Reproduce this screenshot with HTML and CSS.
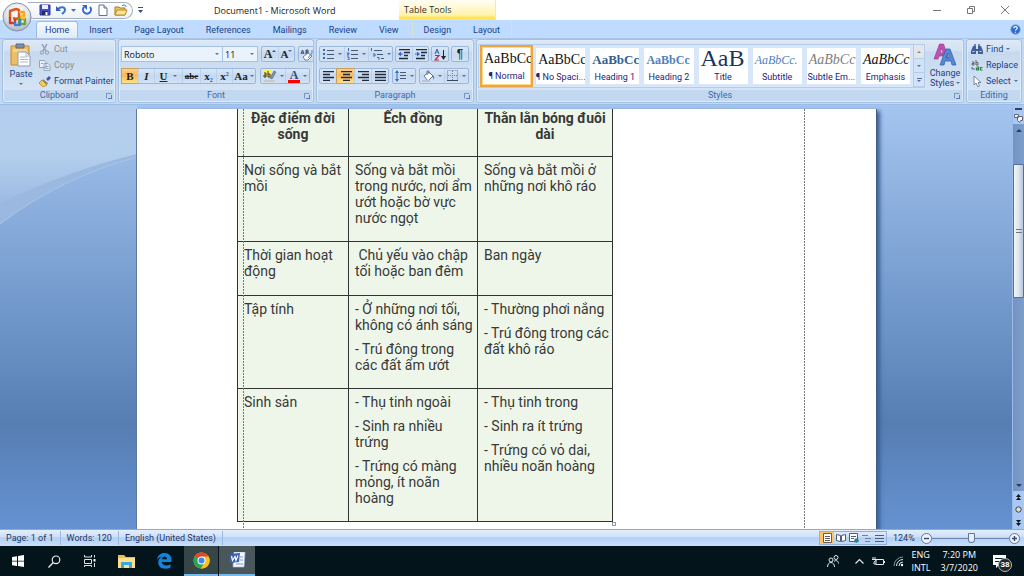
FILE: index.html
```html
<!DOCTYPE html>
<html lang="vi">
<head>
<meta charset="utf-8">
<meta name="viewport" content="width=device-width, initial-scale=1">
<title>Document1 - Microsoft Word</title>
<link rel="stylesheet" href="styles.css">
</head>
<body>
<div class="app">

<header class="titlebar">
  <button class="office" aria-label="Office Button">
    <svg width="32" height="32" viewBox="0 0 32 32"><defs><radialGradient id="orb" cx=".5" cy=".3" r=".75"><stop offset="0" stop-color="#fff"/><stop offset=".6" stop-color="#dde2e8"/><stop offset="1" stop-color="#9aa8b8"/></radialGradient></defs><circle cx="16" cy="16" r="14" fill="url(#orb)" stroke="#8593a5"/><g fill="none" stroke-width="2.4" stroke-linejoin="round"><path d="M9 17V10l6-2 3 1v8l-3 1-3-1" stroke="#e2571c"/><path d="M18 11h5v5h-4" stroke="#f3a51e"/><path d="M9 16v6h5v-4" stroke="#cf3e22"/><path d="M18 18h6v5h-6z" stroke="#6fa63a"/><path d="M14 21v3h5v-6" stroke="#3f7fce"/><path d="M21 13v4h3" stroke="#f7c43a"/></g></svg>
  </button>
  <div class="qat">
    <button class="q" aria-label="Save"><svg width="12" height="12" viewBox="0 0 12 12"><path d="M1 1h10v10H1z" fill="#4450c0" stroke="#2e3795"/><path d="M3 1h6v4H3z" fill="#e8f0ff"/><path d="M3 7h6v4H3z" fill="#242a66"/><path d="M6.500 8h2v3h-2z" fill="#fff"/></svg></button>
    <button class="q" aria-label="Undo"><svg width="12" height="12" viewBox="0 0 12 12"><path d="M3 5c3-3 7-2 7 1 0 2-2 3-3 4" fill="none" stroke="#3b6fd0" stroke-width="2"/><path d="M1 2v5h5z" fill="#2f5fc0"/></svg></button>
    <button class="q tiny" aria-label="Undo list"><svg width="5" height="3"><path d="M0 0h5L2.500 3z" fill="#4c6ea8"/></svg></button>
    <button class="q" aria-label="Redo"><svg width="12" height="12" viewBox="0 0 12 12"><path d="M3 3a4 4 0 1 0 6 0" fill="none" stroke="#3567cb" stroke-width="2"/><path d="M1 1h5v5z" fill="#3567cb"/></svg></button>
    <button class="q" aria-label="New"><svg width="12" height="12" viewBox="0 0 12 12"><path d="M2 1h5l3 3v7.500H2z" fill="#fff" stroke="#61738f"/><path d="M7 1v3h3" fill="#d5dfed" stroke="#61738f"/></svg></button>
    <button class="q open" aria-label="Open"><svg width="14" height="12" viewBox="0 0 14 12"><path d="M1 3h4l1 1h5v7H1z" fill="#f5c65e" stroke="#a87820"/><path d="M3 6h10l-2 5H1z" fill="#ffe49a" stroke="#b88928"/><path d="M8 2c2-2 4-1 4 1" fill="none" stroke="#3567cb"/></svg></button>
  </div>
  <button class="q custom" aria-label="Customize Quick Access Toolbar"><svg width="5" height="6"><path d="M0 0h5v1H0zM0 3h5L2.500 6z" fill="#34507e"/></svg></button>
  <h1 class="title">Document1 - Microsoft Word</h1>
  <div class="context">Table Tools</div>
  <div class="winbtns">
    <button aria-label="Minimize"><svg width="8" height="8"><path d="M0 4.500h8" stroke="#777"/></svg></button>
    <button aria-label="Restore"><svg width="8" height="8"><path d="M.5 2.500h5v5h-5zM2.500 2V.5h5v5H6" fill="none" stroke="#777"/></svg></button>
    <button aria-label="Close"><svg width="8" height="8"><path d="M0 0l8 8M8 0L0 8" stroke="#777"/></svg></button>
  </div>
</header>

<nav class="tabs">
  <button class="tab active">Home</button>
  <button class="tab">Insert</button>
  <button class="tab">Page Layout</button>
  <button class="tab">References</button>
  <button class="tab">Mailings</button>
  <button class="tab">Review</button>
  <button class="tab">View</button>
  <div class="ctxtabs"><button class="tab">Design</button><button class="tab">Layout</button></div>
  <button class="help" aria-label="Help"><svg width="11" height="11" viewBox="0 0 11 11"><circle cx="5.500" cy="5.500" r="4.800" fill="#2e69cf" stroke="#8daede"/><path d="M3.800 4.200c0-2.200 3.500-2 3.400 0 0 1-1.700 1-1.700 2.400M5.500 7.800v1" fill="none" stroke="#fff" stroke-width="1.200"/></svg></button>
</nav>

<div class="ribbon">
  <section class="group clipboard">
    <div class="body">
      <button class="big paste"><svg width="24" height="24" viewBox="0 0 24 24"><path d="M2 3h18v19H2z" fill="#efbd62" stroke="#bd8d3d"/><path d="M7 1h8v4H7z" fill="#7f8fa6" stroke="#5c6b82"/><path d="M4 6h14v3H4z" fill="#f8d48a"/><path d="M9 9h8l4 4v10H9z" fill="#fff" stroke="#8a9cb8"/><path d="M17 9v4h4M11 14h7M11 16.500h8M11 19h8" fill="none" stroke="#a8b8d0"/></svg><span>Paste</span><i class="dn"></i></button>
      <div class="stack">
        <button class="off"><svg width="12" height="11" viewBox="0 0 12 11"><path d="M3 0l4 7M8 0L4 7" stroke="#8c9cb2" stroke-width="1.400"/><circle cx="3" cy="8.500" r="1.700" fill="none" stroke="#8c9cb2"/><circle cx="8" cy="8.500" r="1.700" fill="none" stroke="#8c9cb2"/></svg>Cut</button>
        <button class="off"><svg width="12" height="11" viewBox="0 0 12 11"><path d="M.5.5h5l1.500 2v5H.5zM5 3.500h4l2 2v5H5z" fill="#e8eff8" stroke="#93a5bd"/><path d="M6.500 6.500h3M6.500 8.500h3M2 3.500h2" stroke="#93a5bd"/></svg>Copy</button>
        <button><svg width="12" height="11" viewBox="0 0 12 11"><path d="M7 3l3-3 2 2-3 3z" fill="#4457a6"/><path d="M4 3l5 4-1 2-5-4z" fill="#7f8aa0"/><path d="M3 4l5 5-4 2-4-4z" fill="#f3cb5b" stroke="#a57d24" stroke-width=".7"/></svg>Format Painter</button>
      </div>
    </div>
    <footer>Clipboard<i class="launch"></i></footer>
  </section>

  <section class="group font">
    <div class="body rows">
      <div class="row">
        <div class="combos">
          <div class="combo face"><select aria-label="Font"><option>Roboto</option></select><i class="dn"></i></div>
          <div class="combo size"><select aria-label="Font size"><option>11</option></select><i class="dn"></i></div>
        </div>
        <div class="set"><button class="ser grow" aria-label="Grow font">A<i class="up"></i></button><button class="ser shrink" aria-label="Shrink font">A<i class="dn"></i></button></div>
        <div class="set"><button aria-label="Clear formatting"><svg width="14" height="13" viewBox="0 0 14 13"><path d="M1 6l1.500-4L4 6M1.500 5h2M6 2v4h2V4H6h2V2z" fill="none" stroke="#344a70"/><path d="M3 9l5-4 4 3-4 4H5z" fill="#fff" stroke="#6480ad"/><path d="M8 10l4-5V2" fill="none" stroke="#6480ad"/></svg></button></div>
      </div>
      <div class="row between">
        <div class="set">
          <button class="ser on"><b>B</b></button><button class="ser"><em>I</em></button><button class="ser wide"><u>U</u><i class="dn"></i></button><button class="ser strike">abc</button><button class="ser">x<sub>2</sub></button><button class="ser">x<sup>2</sup></button><button class="ser caser">Aa<i class="dn"></i></button>
        </div>
        <div class="set">
          <button class="mid" aria-label="Highlight"><svg width="14" height="14" viewBox="0 0 14 14"><path d="M0 1h9v8H0z" fill="#ffef62"/><path d="M1 4h2v4H1V6h2M5 2v6h2V5H5" fill="none" stroke="#333"/><path d="M7 9l4-7 2 1-4 7z" fill="#8192ae" stroke="#4f5f7b" stroke-width=".6"/><path d="M1 11h11v2H1z" fill="#cacac2"/></svg><i class="dn"></i></button>
          <button class="mid" aria-label="Font color"><span class="fc">A</span><i class="dn"></i></button>
        </div>
      </div>
    </div>
    <footer>Font<i class="launch"></i></footer>
  </section>

  <section class="group para">
    <div class="body rows">
      <div class="row tight">
        <div class="set">
          <button class="mid" aria-label="Bullets"><svg width="12" height="12"><path d="M0 2h2M0 6h2M0 10h2" stroke="#3e68b4" stroke-width="2"/><path d="M4 2.500h7M4 6.500h7M4 10.500h7" stroke="#4a5a76"/></svg><i class="dn"></i></button>
          <button class="mid" aria-label="Numbering"><svg width="12" height="12"><path d="M1.500 0v3M0 5h2v1H0v1h2M0 9h2v3H0" fill="none" stroke="#3e68b4"/><path d="M4 2.500h7M4 6.500h7M4 10.500h7" stroke="#4a5a76"/></svg><i class="dn"></i></button>
          <button class="mid" aria-label="Multilevel list"><svg width="14" height="12"><path d="M1.500 0v3M3 6h2v2H3M7 9.500h2V12" fill="none" stroke="#3e68b4"/><path d="M4 2.500h8M7 6.500h6M11 10.500h3" stroke="#4a5a76"/></svg><i class="dn"></i></button>
        </div>
        <div class="set">
          <button aria-label="Decrease indent"><svg width="12" height="11"><path d="M1 .5h11M6 3.500h6M6 6.500h4M1 9.500h9" stroke="#222b3c" stroke-width="1.500"/><path d="M0 5l3-2.500v5zM3 4.500h2v1H3z" fill="#3569c4"/></svg></button>
          <button aria-label="Increase indent"><svg width="12" height="11"><path d="M1 .5h11M6 3.500h6M6 6.500h4M1 9.500h9" stroke="#222b3c" stroke-width="1.500"/><path d="M5 5L2 2.500v5zM0 4.500h2v1H0z" fill="#3569c4"/></svg></button>
        </div>
        <div class="set"><button aria-label="Sort"><svg width="13" height="13" viewBox="0 0 13 13"><path d="M1 6l2-5 2 5M2 4h2" fill="none" stroke="#3a62b4"/><path d="M1 7.500h4L1 12h4" fill="none" stroke="#b32b45" stroke-width="1.200"/><path d="M9.500 2v8" stroke="#222"/><path d="M7 8h5l-2.500 4z" fill="#222"/></svg></button></div>
        <div class="set"><button class="pil">¶</button></div>
      </div>
      <div class="row aligns">
        <div class="set">
          <button aria-label="Align left"><svg width="11" height="10"><path d="M0 .5h11M0 3.500h7M0 6.500h11M0 9.500h7" stroke="#202a3c" stroke-width="1.400"/></svg></button>
          <button class="on" aria-label="Center"><svg width="11" height="10"><path d="M0 .5h11M2 3.500h7M0 6.500h11M2 9.500h7" stroke="#202a3c" stroke-width="1.400"/></svg></button>
          <button aria-label="Align right"><svg width="11" height="10"><path d="M0 .5h11M4 3.500h7M0 6.500h11M4 9.500h7" stroke="#202a3c" stroke-width="1.400"/></svg></button>
          <button aria-label="Justify"><svg width="11" height="10"><path d="M0 .5h11M0 3.500h11M0 6.500h11M0 9.500h11" stroke="#202a3c" stroke-width="1.400"/></svg></button>
        </div>
        <div class="set"><button class="lh" aria-label="Line spacing"><svg width="12" height="12"><path d="M2 2v8" stroke="#3569c4"/><path d="M0 3l2-3 2 3zM0 9l2 3 2-3z" fill="#3569c4"/><path d="M5 2.500h6M5 5.500h6M5 8.500h6" stroke="#4a5a76"/></svg><i class="dn"></i></button></div>
        <div class="set">
          <button class="mid" aria-label="Shading"><svg width="13" height="12"><path d="M2 6l5-4 4 4-5 5z" fill="#fff" stroke="#667a9a"/><path d="M5 5V1h2v3" fill="none" stroke="#667a9a"/><path d="M10 5c3 1 2 4 2 5z" fill="#3569c4"/><path d="M0 10h8v2H0z" fill="#b8c4d6"/></svg><i class="dn"></i></button>
          <button class="mid" aria-label="Borders"><svg width="12" height="12"><path d="M.5.5h10v10H.5zM5.500 1v9M1 5.500h9" fill="none" stroke="#70819c" stroke-dasharray="1 1"/><path d="M0 10.500h11" stroke="#38465e"/></svg><i class="dn"></i></button>
        </div>
      </div>
    </div>
    <footer>Paragraph<i class="launch"></i></footer>
  </section>

  <section class="group styles">
    <div class="body">
      <div class="gallery">
        <button class="card sel"><span class="s1">AaBbCc</span><small>¶ Normal</small></button>
        <button class="card"><span class="s1">AaBbCc</span><small>¶ No Spaci...</small></button>
        <button class="card"><span class="s1 h1">AaBbCc</span><small>Heading 1</small></button>
        <button class="card"><span class="s1 h2">AaBbCc</span><small>Heading 2</small></button>
        <button class="card"><span class="s1 ttl">AaB</span><small>Title</small></button>
        <button class="card"><span class="s1 sub">AaBbCc.</span><small>Subtitle</small></button>
        <button class="card"><span class="s1 sem">AaBbCc</span><small>Subtle Em...</small></button>
        <button class="card"><span class="s1 em">AaBbCc</span><small>Emphasis</small></button>
        <div class="gscroll"><button class="dim" aria-label="Row up"><i class="up"></i></button><button aria-label="Row down"><i class="dn"></i></button><button aria-label="More styles"><i class="bar"></i><i class="dn"></i></button></div>
      </div>
      <button class="big change"><svg width="24" height="24" viewBox="0 0 24 24"><path fill-rule="evenodd" d="M1 16L6.500 1h4L16 16h-4l-1-3H6l-1 3zM7 10h3L8.500 5z" fill="#c050b4" stroke="#8e3588" stroke-width=".6"/><path fill-rule="evenodd" d="M7 22L13 6h4l6 16h-4l-1-4h-6l-1 4zM13 15h4l-2-5z" fill="#5788d6" stroke="#2f5ba6" stroke-width=".7"/></svg><span>Change</span><span class="last">Styles<i class="dn"></i></span></button>
    </div>
    <footer>Styles<i class="launch"></i></footer>
  </section>

  <section class="group editing">
    <div class="body stack">
      <button><svg width="12" height="11" viewBox="0 0 12 11"><path d="M2 2h3v3h2V2h3l2 5v3H7V7H5v3H0V7z" fill="#3f5f9c"/><path d="M3 0h2v2H3zM7 0h2v2H7z" fill="#6a86bb"/><path d="M1.500 7.500h2M8.500 7.500h2" stroke="#cfdcf0"/></svg>Find <i class="dn"></i></button>
      <button><svg width="12" height="11" viewBox="0 0 12 11"><path d="M1 2h2v3H1V3.500h2M5 0v5h2V2.500H5" fill="none" stroke="#666"/><path d="M5.500 7h2v3h-2V8.500h2M11.500 7.500h-2v2.500h2" fill="none" stroke="#28834a" stroke-width="1.200"/><path d="M1 7v2h3" fill="none" stroke="#3569c4"/></svg>Replace</button>
      <button><svg width="12" height="11" viewBox="0 0 12 11"><path d="M3 0v9l2-2 2 4 1.500-1L7 6.500h3z" fill="#fff" stroke="#5d6f8e" stroke-width=".8"/></svg>Select <i class="dn"></i></button>
    </div>
    <footer>Editing</footer>
  </section>
</div>

<main class="workspace">
  <svg class="swoosh" viewBox="0 0 137 125" preserveAspectRatio="none" aria-hidden="true"><defs><linearGradient id="sw" x1="0" y1="0" x2="0" y2="1"><stop offset="0" stop-color="#b3cdef"/><stop offset=".5" stop-color="#b4cfed"/><stop offset="1" stop-color="#9cbbe3"/></linearGradient></defs><path d="M0 119Q62 72 137 52V0H0z" fill="#9bb9e0"/><path d="M0 98Q70 65 137 49V0H0z" fill="url(#sw)"/><path d="M0 119Q62 72 137 52" fill="none" stroke="#a9c5eb"/></svg>
  <div class="page">
    <table class="doc">
      <colgroup><col class="c1"><col class="c2"><col></colgroup>
      <thead><tr class="r0"><th>Đặc điểm đời sống</th><th>Ếch đồng</th><th>Thằn lằn bóng đuôi dài</th></tr></thead>
      <tbody>
        <tr class="r1"><td>Nơi sống và bắt mồi</td><td>Sống và bắt mồi trong nước, nơi ẩm ướt hoặc bờ vực nước ngọt</td><td>Sống và bắt mồi ở những nơi khô ráo</td></tr>
        <tr class="r2"><td>Thời gian hoạt động</td><td>&nbsp;Chủ yếu vào chập tối hoặc ban đêm</td><td>Ban ngày</td></tr>
        <tr class="r3"><td>Tập tính</td><td><p>- Ở những nơi tối, không có ánh sáng</p><p>- Trú đông trong các đất ẩm ướt</p></td><td><p>- Thường phơi nắng</p><p>- Trú đông trong các đất khô ráo</p></td></tr>
        <tr class="r4"><td>Sinh sản</td><td><p>- Thụ tinh ngoài</p><p>- Sinh ra nhiều trứng</p><p>- Trứng có màng mỏng, ít noãn hoàng</p></td><td><p>- Thụ tinh trong</p><p>- Sinh ra ít trứng</p><p>- Trứng có vỏ dai, nhiều noãn hoàng</p></td></tr>
      </tbody>
    </table>
    <i class="guide left"></i><i class="guide right"></i><i class="handle"></i>
  </div>
  <div class="vscroll">
    <i class="split"></i>
    <button class="ruler" aria-label="View ruler"><svg width="9" height="10"><path d="M.5 1.500h4v3h-4zM3.500 3.500h5v4h-2l-1 2-2-2z" fill="#f4f6fa" stroke="#5e6680"/></svg></button>
    <div class="track">
      <button aria-label="Scroll up"><i class="up"></i></button>
      <div class="thumb"><i></i><i></i></div>
      <button class="end" aria-label="Scroll down"><i class="dn"></i></button>
    </div>
    <div class="browse">
      <button aria-label="Previous page"><svg width="5" height="6"><path d="M0 3l2.500-3L5 3zM0 6l2.500-3L5 6z" fill="#111"/></svg></button>
      <button aria-label="Browse object"><svg width="7" height="7"><circle cx="3.500" cy="3.500" r="2.700" fill="#ddd" stroke="#444"/></svg></button>
      <button aria-label="Next page"><svg width="5" height="6"><path d="M0 0l2.500 3L5 0zM0 3l2.500 3L5 3z" fill="#111"/></svg></button>
    </div>
  </div>
</main>

<div class="status">
  <span>Page: 1 of 1</span><span>Words: 120</span><span>English (United States)</span>
  <div class="views">
    <button class="on" aria-label="Print layout"><svg width="9" height="10"><path d="M.5.5h8v9h-8zM2 3.500h5M2 5.500h5M2 7.500h5" fill="#fff" stroke="#665c50"/></svg></button>
    <button aria-label="Full screen reading"><svg width="10" height="10"><path d="M.5 1.500l4 1v6l-4-1zM9.500 1.500l-4 1v6l4-1z" fill="#fff" stroke="#4e5d78"/></svg></button>
    <button aria-label="Web layout"><svg width="10" height="10"><path d="M.5.5h8v8h-8zM2 3.500h5M2 5.500h3" fill="#fff" stroke="#4e5d78"/><circle cx="7.500" cy="7.500" r="2.300" fill="#2f7e9a"/></svg></button>
    <button aria-label="Outline"><svg width="9" height="9"><path d="M0 1.500h6M3 4.500h6M3 7.500h5" stroke="#71819e"/></svg></button>
    <button aria-label="Draft"><svg width="9" height="9"><path d="M0 1.500h9M0 4.500h9M0 7.500h9" stroke="#4e5d78"/></svg></button>
  </div>
  <span class="pct">124%</span>
  <button class="zb" aria-label="Zoom out"><svg width="11" height="11"><circle cx="5.500" cy="5.500" r="5" fill="#eef4fc" stroke="#61769a"/><path d="M3 5.500h5" stroke="#34486c" stroke-width="1.400"/></svg></button>
  <input class="zoom" type="range" min="0" max="100" value="52" aria-label="Zoom">
  <button class="zb" aria-label="Zoom in"><svg width="11" height="11"><circle cx="5.500" cy="5.500" r="5" fill="#eef4fc" stroke="#61769a"/><path d="M3 5.500h5M5.500 3v5" stroke="#34486c" stroke-width="1.400"/></svg></button>
</div>

<footer class="taskbar">
  <button aria-label="Start"><svg width="12" height="12"><path d="M0 2l5-.8v4.500H0zM6 1l6-1v5.700H6zM0 6.500h5V11l-5-.8zM6 6.500h6V12l-6-1z" fill="#fff"/></svg></button>
  <button aria-label="Search"><svg width="13" height="13"><circle cx="8" cy="4.800" r="3.800" fill="none" stroke="#e8ecee" stroke-width="1.200"/><path d="M5.300 7.500L.5 12.500" stroke="#e8ecee" stroke-width="1.300"/></svg></button>
  <button aria-label="Task view"><svg width="13" height="12"><path d="M.5 0v2h7V0M.5 4.500h7v4h-7zM.5 12v-1.500h7V12M10.500 0v2.500M10.500 8v4" fill="none" stroke="#dfe4e6"/><path d="M9.500 4h2v2.500h-2z" fill="#fff"/></svg></button>
  <button class="app1" aria-label="File Explorer"><svg width="17" height="15"><path d="M0 1h6l2 2h9v11H0z" fill="#eebb4c"/><path d="M0 4h17v10H0z" fill="#fde08b"/><path d="M3 8h11v6h-3v-3H6v3H3z" fill="#39a9e0"/></svg></button>
  <button class="app1" aria-label="Edge"><svg width="16" height="16" viewBox="0 0 16 16"><path d="M1 7C1.500 2.500 4.800 0 8.400 0 13 0 15.500 3.200 15.500 7v2H5.700c.2 3.700 5.300 4.300 8.800 2.200v3.300C9.500 17 2.200 15.800 2.200 9.500c0-2.600 1.400-4.500 3.700-5.700C3.500 4 2 5.300 1 7zm5-0.700h5C11 2.600 6.300 2.800 6 6.300z" fill="#1283df"/></svg></button>
  <button class="run chrome" aria-label="Chrome"><svg width="17" height="17" viewBox="0 0 17 17"><circle cx="8.500" cy="8.500" r="8" fill="#fbc318"/><path d="M8.500 8.500L1.500 4.500A8 8 0 0 1 15.500 5z" fill="#e04436"/><path d="M8.500 8.500L1.500 4.500A8 8 0 0 0 8 16.500L12 10z" fill="#29a354"/><path d="M8.500 4.500h7.100a8 8 0 0 1-7.600 12L12 10z" fill="#fbc318"/><circle cx="8.500" cy="8.500" r="4" fill="#fff"/><circle cx="8.500" cy="8.500" r="3" fill="#4484ef"/></svg></button>
  <button class="run word" aria-label="Word"><svg width="17" height="16" viewBox="0 0 17 16"><path d="M5 0h11l-1 15H4z" fill="#f4f7fd" stroke="#a9b8d8" stroke-width=".7"/><path d="M11 5h3M11 8h3M7 12h7" stroke="#7c96c6"/><path d="M1 2l10-1-1 9-10 1z" fill="#3b5eae"/><path d="M2.500 4l1 4.500L6 4.500l1 3.800L9 3.500" fill="none" stroke="#fff" stroke-width="1.200"/></svg></button>
  <div class="tray">
    <svg class="people" width="12" height="12"><circle cx="4" cy="5" r="2" fill="none" stroke="#e4e8ea"/><circle cx="9" cy="2.500" r="2" fill="none" stroke="#e4e8ea"/><path d="M.5 12c0-6 7-6 7 0M7 6.500c2-2 4.500-.5 4.500 2" fill="none" stroke="#e4e8ea"/></svg>
    <svg width="9" height="6"><path d="M.5 5.500l4-4 4 4" fill="none" stroke="#e4e8ea" stroke-width="1.200"/></svg>
    <svg class="batt" width="13" height="9"><path d="M4 2.500h7.500v5H4zM12.500 4v2M1 0v2M3 0v2M0 2.500h4v1L2 5v2h2" fill="none" stroke="#e4e8ea"/></svg>
    <svg class="wifi" width="11" height="11"><path d="M1 10A9 9 0 0 1 10 1" fill="none" stroke="#8b979b"/><path d="M3.500 10A6.500 6.500 0 0 1 10 3.500M6 10a4 4 0 0 1 4-4" fill="none" stroke="#dfe4e6"/><circle cx="9" cy="9" r="1.200" fill="#fff"/></svg>
    <div class="two">ENG<br>INTL</div>
    <div class="two clock">7:20 PM<br>3/7/2020</div>
    <div class="notif"><svg width="13" height="13"><path d="M0 0h13v10H6l-3 3v-3H0z" fill="#fff"/><path d="M2 3.500h9M2 6.500h9" stroke="#102026"/></svg><b>38</b></div>
  </div>
</footer>
</div>
</body>
</html>
```
FILE: styles.css
```css
* { box-sizing: border-box; }
html, body { height: 100%; }
body { margin: 0; overflow: hidden; font-family: Roboto, "Open Sans", sans-serif; font-size: 9px; color: #15428b; }
button { font: inherit; color: inherit; background: none; border: 0; padding: 0; margin: 0; display: flex; align-items: center; justify-content: center; }
svg { display: block; flex: none; }
.app { display: flex; flex-direction: column; height: 100vh; }

.dn, .up { flex: none; display: inline-block; width: 0; height: 0; border: 2px solid transparent; border-top-color: #55719f; border-bottom-width: 0; }
.up { border-top-width: 0; border-bottom: 2px solid #7d8894; }

/* title bar */
.titlebar { position: relative; display: flex; align-items: center; height: 20px; background: #fff; padding-left: 28px; flex: none; }
.office { position: absolute; left: 1px; top: 1px; z-index: 3; width: 32px; height: 32px; }
.qat { display: flex; align-items: center; width: 105px; height: 17px; padding-left: 10px; border: 1px solid #a6afbb; border-left: 0; border-radius: 0 9px 9px 0; background: linear-gradient(#fff, #edf2f9); }
.q { width: 14px; margin-right: 2px; }
.q.tiny { width: 7px; margin-right: 3px; }
.q.open { margin-left: 2px; }
.q.custom { margin-left: 2px; width: 10px; margin-right: 69px; }
.title { margin: 0; width: 185px; font-family: "Open Sans", sans-serif; font-size: 9px; font-weight: 400; color: #222; white-space: nowrap; }
.context { width: 97px; height: 20px; padding: 0 5px; line-height: 20px; font-family: "Open Sans", sans-serif; color: #333; border-right: 1px solid #f5e9a8; background: linear-gradient(#fffef5, #fff3ae 75%, #ffe14a 90%, #fbe889); }
.winbtns { margin-left: auto; display: flex; gap: 26px; padding-right: 15px; }

/* tabs */
.tabs { display: flex; align-items: flex-end; height: 18px; padding-left: 36px; background: #bfdbff; flex: none; }
.tab { height: 17px; padding: 0 11px; white-space: nowrap; }
.tab.active { padding: 0 8px; border: 1px solid #9dbbe3; border-bottom: 0; border-radius: 3px 3px 0 0; background: linear-gradient(#f8fbff, #dfeaf7); }
.ctxtabs { display: flex; margin-left: 2px; border-left: 1px solid #d9e2cf; border-right: 1px solid #d9e2cf; }
.help { margin: 0 3px 3px auto; }

/* ribbon */
.ribbon { display: flex; gap: 2px; height: 67px; padding: 0 2px 1px; background: #c3d8f1; border-top: 1px solid #a9c4e8; border-bottom: 1px solid #9dbde8; flex: none; }
.group { display: flex; flex-direction: column; border: 1px solid #a4c0e0; border-radius: 3px; background: linear-gradient(#dde8f5, #d3e1f2 18%, #c7d9ee 19%, #d8e7f7); box-shadow: inset 0 0 0 1px #dfebf8; overflow: hidden; }
.group .body { flex: 1; display: flex; }
.group footer { position: relative; height: 11px; line-height: 11px; margin: 0 1px 1px; text-align: center; background: #c1d8f0; color: #3e6aaa; }
.launch { position: absolute; right: 2px; top: 3px; width: 6px; height: 6px; border: 1px solid #7794bf; border-right-color: transparent; border-bottom-color: transparent; }
.launch::after { content: ""; position: absolute; right: -1px; bottom: -1px; width: 3px; height: 3px; border: 1px solid #5d7cac; border-left: 0; border-top: 0; }
.clipboard { width: 114px; }
.font { width: 196px; }
.para { width: 158px; }
.styles { flex: 1; min-width: 0; }
.editing { width: 56px; }

.big { flex-direction: column; justify-content: flex-start; text-align: center; line-height: 10px; }
.paste { width: 36px; padding-top: 3px; gap: 2px; }
.paste .dn { margin-top: 2px; }
.stack { display: flex; flex-direction: column; padding-top: 1px; }
.stack button { height: 16px; gap: 3px; justify-content: flex-start; white-space: nowrap; }
.stack .off { color: #8d8d8d; }
.editing .body { padding-left: 4px; }

.rows { flex-direction: column; gap: 6px; padding: 6px 2px 0; }
.row { display: flex; gap: 3px; height: 16px; }
.row.tight { gap: 2px; }
.between { justify-content: space-between; padding-right: 1px; }
.set { display: flex; border: 1px solid #9ab7dd; border-radius: 2px; background: linear-gradient(#dbe7f6, #c6d9f0 50%, #d2e2f5); color: #222; }
.set button { width: 16px; }
.aligns .set button { width: 17px; }
.set button + button { border-left: 1px solid #bad0ec; }
.set .mid, .aligns .set .mid { width: 24px; gap: 3px; }
.set .lh, .aligns .set .lh { width: 22px; gap: 3px; }
.set .wide { width: 28px; gap: 6px; }
.set .caser { width: 23px; gap: 2px; }
.ser { font-family: "Liberation Serif", serif; font-size: 11px; font-weight: 700; }
.ser sub, .ser sup { font-size: 6px; color: #2456b0; line-height: 6px; align-self: flex-end; }
.ser sup { align-self: flex-start; margin-top: 2px; }
.ser.grow { font-size: 12px; }
.grow .up, .shrink .dn { align-self: flex-start; margin-top: 3px; border-bottom-color: #2456b0; }
.set .strike { width: 18px; font-size: 9px; text-decoration: line-through; }
.set .on { background: linear-gradient(#fbcf8d, #fdb759 45%, #fde08c); box-shadow: 0 0 0 1px #c9a15d; }
.fc { width: 12px; height: 13px; line-height: 10px; font-family: "Liberation Serif", serif; font-size: 12px; font-weight: 700; color: #334a80; border-bottom: 3px solid #f00; }
.pil { font-family: "Liberation Sans", sans-serif; font-size: 12px; }
.combos { display: flex; }
.combo { display: flex; align-items: center; border: 1px solid #a5c1e6; background: #eaf2fb; padding-right: 3px; }
.combo select { appearance: none; border: 0; padding: 0 0 0 2px; background: none; font: 9px "Open Sans", sans-serif; color: #111; flex: 1; min-width: 0; }
.face { width: 102px; }
.size { width: 35px; border-left: 0; }

.gallery { display: flex; flex: 1; min-width: 0; margin: 4px 2px 0 1px; height: 44px; border: 1px solid #b4cdea; background: #d7e6f8; padding-left: 1px; gap: 1px; align-items: center; }
.card { flex: 1; min-width: 0; height: 40px; flex-direction: column; justify-content: flex-start; background: #fff; border: 2px solid #d7e6f8; overflow: hidden; }
.card.sel { height: 42px; border-color: #eda53f; box-shadow: inset 0 0 0 1px #ffd987; }
.s1 { height: 24px; line-height: 24px; padding-left: 2px; align-self: flex-start; font-family: "Liberation Serif", serif; font-size: 14px; color: #111; }
.card small { font-size: 9px; line-height: 10px; white-space: nowrap; color: #24227a; }
.s1.h1 { font-weight: 700; color: #365f91; font-size: 13px; }
.s1.h2 { font-weight: 700; color: #4f81bd; font-size: 12px; }
.s1.ttl { font-size: 24px; line-height: 20px; color: #17365d; }
.s1.sub { font-style: italic; color: #4f81bd; font-size: 12px; }
.s1.sem { font-style: italic; color: #808080; }
.s1.em { font-style: italic; }
.gscroll { width: 11px; align-self: stretch; display: flex; flex-direction: column; border-left: 1px solid #b4cdea; }
.gscroll button { flex: 1; flex-direction: column; gap: 1px; border-bottom: 1px solid #b4cdea; background: #d3e3f7; }
.gscroll .dim { background: #e4e6ea; }
.bar { width: 5px; height: 1px; background: #55719f; }
.change { width: 36px; padding-top: 3px; }
.change span { margin-top: 1px; line-height: 10px; }
.change .last { display: flex; align-items: center; gap: 2px; margin-top: 0; }

/* document area */
.workspace { position: relative; display: flex; flex: 1; min-height: 0; overflow: hidden; background: linear-gradient(#a5c5f0, #6a92c5 55%, #567eb3 75%, #6592d0); }
.swoosh { position: absolute; left: 0; top: 0; width: 137px; height: 125px; }
.page { position: relative; flex: 1; margin: 4px 136px 0 137px; padding-left: 100px; background: #fff; box-shadow: -1px 0 0 #63779a, 1px 0 0 #405e88, 4px 2px 4px #3a5f94; }
.doc { width: 376px; table-layout: fixed; border-collapse: collapse; font-family: Roboto, sans-serif; font-size: 14px; line-height: 16px; color: #383838; background: #eef6e9; }
.c1 { width: 111px; }
.c2 { width: 129px; }
.doc th, .doc td { border: 1px solid #333; padding: 5px 1px 0 6px; vertical-align: top; text-align: left; }
.doc th { border-top: 0; padding: 1px 6px 0; text-align: center; font-weight: 700; }
.doc p { margin: 0 0 8px; }
.r0 { height: 47px; }
.r1 { height: 85px; }
.r2 { height: 54px; }
.r3 { height: 93px; }
.r4 { height: 133px; }
.guide { position: absolute; top: 0; bottom: 0; width: 1px; background: repeating-linear-gradient(#777 0 2px, transparent 2px 3px); }
.guide.left { left: 106px; }
.guide.right { right: 71px; }
.handle { position: absolute; left: 475px; top: 413px; width: 4px; height: 4px; border: 1px solid #999; background: #fff; }

.vscroll { width: 12px; display: flex; flex-direction: column; align-items: stretch; background: #a9c8f3; border-left: 1px solid #9abbe8; }
.split { height: 2px; margin: 3px 2px 2px; background: #36415c; }
.ruler { height: 12px; }
.track { flex: 1; display: flex; flex-direction: column; background: linear-gradient(90deg, #7393c3, #7d9dca); }
.track button { height: 12px; }
.track .up { border-width: 0 3px 3px; border-bottom-color: #2b3c5d; }
.track .dn { border-width: 3px 3px 0; border-top-color: #2b3c5d; }
.track .end { margin-top: auto; }
.thumb { height: 134px; margin-top: 28px; display: flex; flex-direction: column; align-items: center; justify-content: center; gap: 2px; border: 1px solid #53709f; border-radius: 1px; background: linear-gradient(90deg, #f4f6f9, #dfe6ee 50%, #b4c5dc); }
.thumb i { width: 6px; height: 1px; background: #71767f; }
.browse { height: 38px; display: flex; flex-direction: column; justify-content: space-around; align-items: center; }

/* status bar */
.status { display: flex; align-items: center; height: 17px; flex: none; background: linear-gradient(#e3eefc, #cfe1f8 40%, #b3d0f5 50%, #c9dff9); border-top: 1px solid #8aaad8; padding-right: 4px; white-space: nowrap; color: #1a3568; }
.status > span { padding: 0 6px; line-height: 14px; border-right: 1px solid #9bbbe3; }
.status > .pct { border: 0; width: 34px; }
.views { display: flex; height: 14px; margin-left: auto; border: 1px solid #91b0dc; }
.views button { width: 13px; }
.views button.on { width: 14px; background: #fdc469; }
.zoom { appearance: none; width: 77px; height: 12px; margin: 0; background: linear-gradient(#6d86ae, #6d86ae) center / 100% 1px no-repeat; }
.zoom::-webkit-slider-thumb { appearance: none; width: 7px; height: 10px; border: 1px solid #60779d; border-radius: 1px 1px 4px 4px; background: #e8f0fb; }

/* taskbar */
.taskbar { display: flex; height: 30px; flex: none; background: #03151b; color: #fff; }
.taskbar button { width: 36px; }
.taskbar .app1 { width: 37px; }
.taskbar .run { width: 34px; margin-left: 2px; border-bottom: 2px solid #76b9ed; background: #364548; }
.taskbar .run + .run { margin-left: 1px; }
.taskbar .word { width: 36px; background: #4a575a; }
.tray { margin-left: auto; display: flex; align-items: center; gap: 8px; padding-right: 11px; }
.people { margin-right: 8px; }
.two { font-family: "Open Sans", sans-serif; font-size: 9px; line-height: 13px; }
.clock { text-align: center; padding: 0 7px 0 2px; }
.notif { position: relative; width: 20px; }
.notif b { position: absolute; left: 5px; top: 3px; width: 14px; height: 14px; border: 1px solid #b5babd; border-radius: 50%; background: #1d292e; font-size: 8px; line-height: 12px; text-align: center; }
```
